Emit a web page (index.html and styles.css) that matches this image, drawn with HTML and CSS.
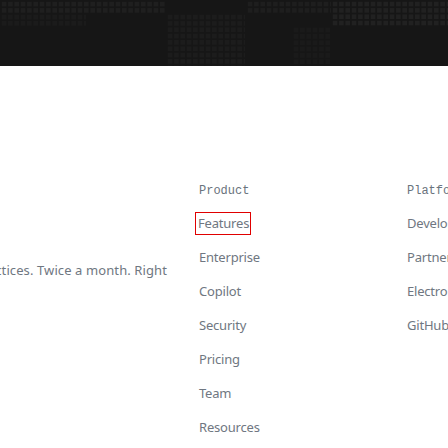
FILE: index.html
```html
<!DOCTYPE html>
<html>
<head>
<meta charset="utf-8">
<link rel="stylesheet" href="styles.css">
</head>
<body>
<header class="hero">
  <div class="dots p1"></div>
  <div class="dots p2"></div>
  <div class="dots p3"></div>
  <div class="dots p4"></div>
  <div class="dots p5"></div>
  <div class="dots p6"></div>
</header>
<footer class="footer">
  <div class="col col-news">
    <p class="news">Subscribe for developer news, tips and best practices. Twice a month. Right</p>
  </div>
  <nav class="col col-links">
    <h3 class="col-title">Product</h3>
    <ul class="links">
      <li><a class="link focused" href="#">Features</a></li>
      <li><a class="link" href="#">Enterprise</a></li>
      <li><a class="link" href="#">Copilot</a></li>
      <li><a class="link" href="#">Security</a></li>
      <li><a class="link" href="#">Pricing</a></li>
      <li><a class="link" href="#">Team</a></li>
      <li><a class="link" href="#">Resources</a></li>
    </ul>
  </nav>
  <nav class="col col-links">
    <h3 class="col-title">Platform</h3>
    <ul class="links">
      <li><a class="link" href="#">Developer API</a></li>
      <li><a class="link" href="#">Partners</a></li>
      <li><a class="link" href="#">Electron</a></li>
      <li><a class="link" href="#">GitHub Desktop</a></li>
    </ul>
  </nav>
</footer>
</body>
</html>
```

FILE: styles.css
```css
html, body {
  margin: 0;
  padding: 0;
  background: #ffffff;
  overflow: hidden;
  width: 448px;
  height: 448px;
}
body {
  font-family: "Noto Sans", "Open Sans", sans-serif;
  color: #6a737d;
}
.hero {
  position: relative;
  height: 66px;
  background: #161616;
  overflow: hidden;
}
.dots {
  position: absolute;
  background-color: #1d1d1d;
  background-image:
    linear-gradient(90deg, #161616 2px, transparent 2px),
    linear-gradient(#161616 2px, transparent 2px);
  background-size: 6.33px 6.33px;
}
.p1 { left: 0; top: 0; width: 166px; height: 13px; background-color: #1f1f1f; }
.p2 { left: 0; top: 13px; width: 86px; height: 13px; background-color: #1b1b1b; }
.p3 { left: 166px; top: 13px; width: 79px; height: 53px; background-color: #1c1c1c; }
.p4 { left: 246px; top: 0; width: 85px; height: 13px; background-color: #1e1e1e; }
.p5 { left: 292px; top: 26px; width: 39px; height: 40px; background-color: #1a1a1a; }
.p6 { left: 331px; top: 0; width: 117px; height: 26px; background-color: #212121; }

.footer {
  display: flex;
  gap: 32px;
  padding-top: 114px;
}
.col-news {
  width: 167px;
  flex-shrink: 0;
  display: flex;
  justify-content: flex-end;
  padding-top: 80px;
}
.news {
  margin: 0;
  flex-shrink: 0;
  white-space: nowrap;
  font-size: 13px;
  line-height: 21px;
  letter-spacing: 0.1px;
  color: #6f7781;
}
.col-links {
  width: 177px;
  flex-shrink: 0;
}
.col-links + .col-links {
  margin-left: -1px;
}
.col-title {
  margin: 2px 0 13px;
  font-family: "Liberation Mono", "DejaVu Sans Mono", monospace;
  font-size: 12px;
  font-weight: normal;
  line-height: 18px;
  color: #6a737d;
}
.links {
  list-style: none;
  margin: 0;
  padding: 0;
  display: flex;
  flex-direction: column;
  gap: 13px;
}
.links li {
  height: 21px;
}
.link {
  display: inline-block;
  vertical-align: top;
  font-size: 13px;
  line-height: 21px;
  letter-spacing: -0.2px;
  color: #6f7781;
  text-decoration: none;
  white-space: nowrap;
}
.focused {
  outline: 1px solid #e00000;
  margin-left: -3px;
  padding-left: 2px;
  width: 52px;
  overflow: hidden;
}
```
